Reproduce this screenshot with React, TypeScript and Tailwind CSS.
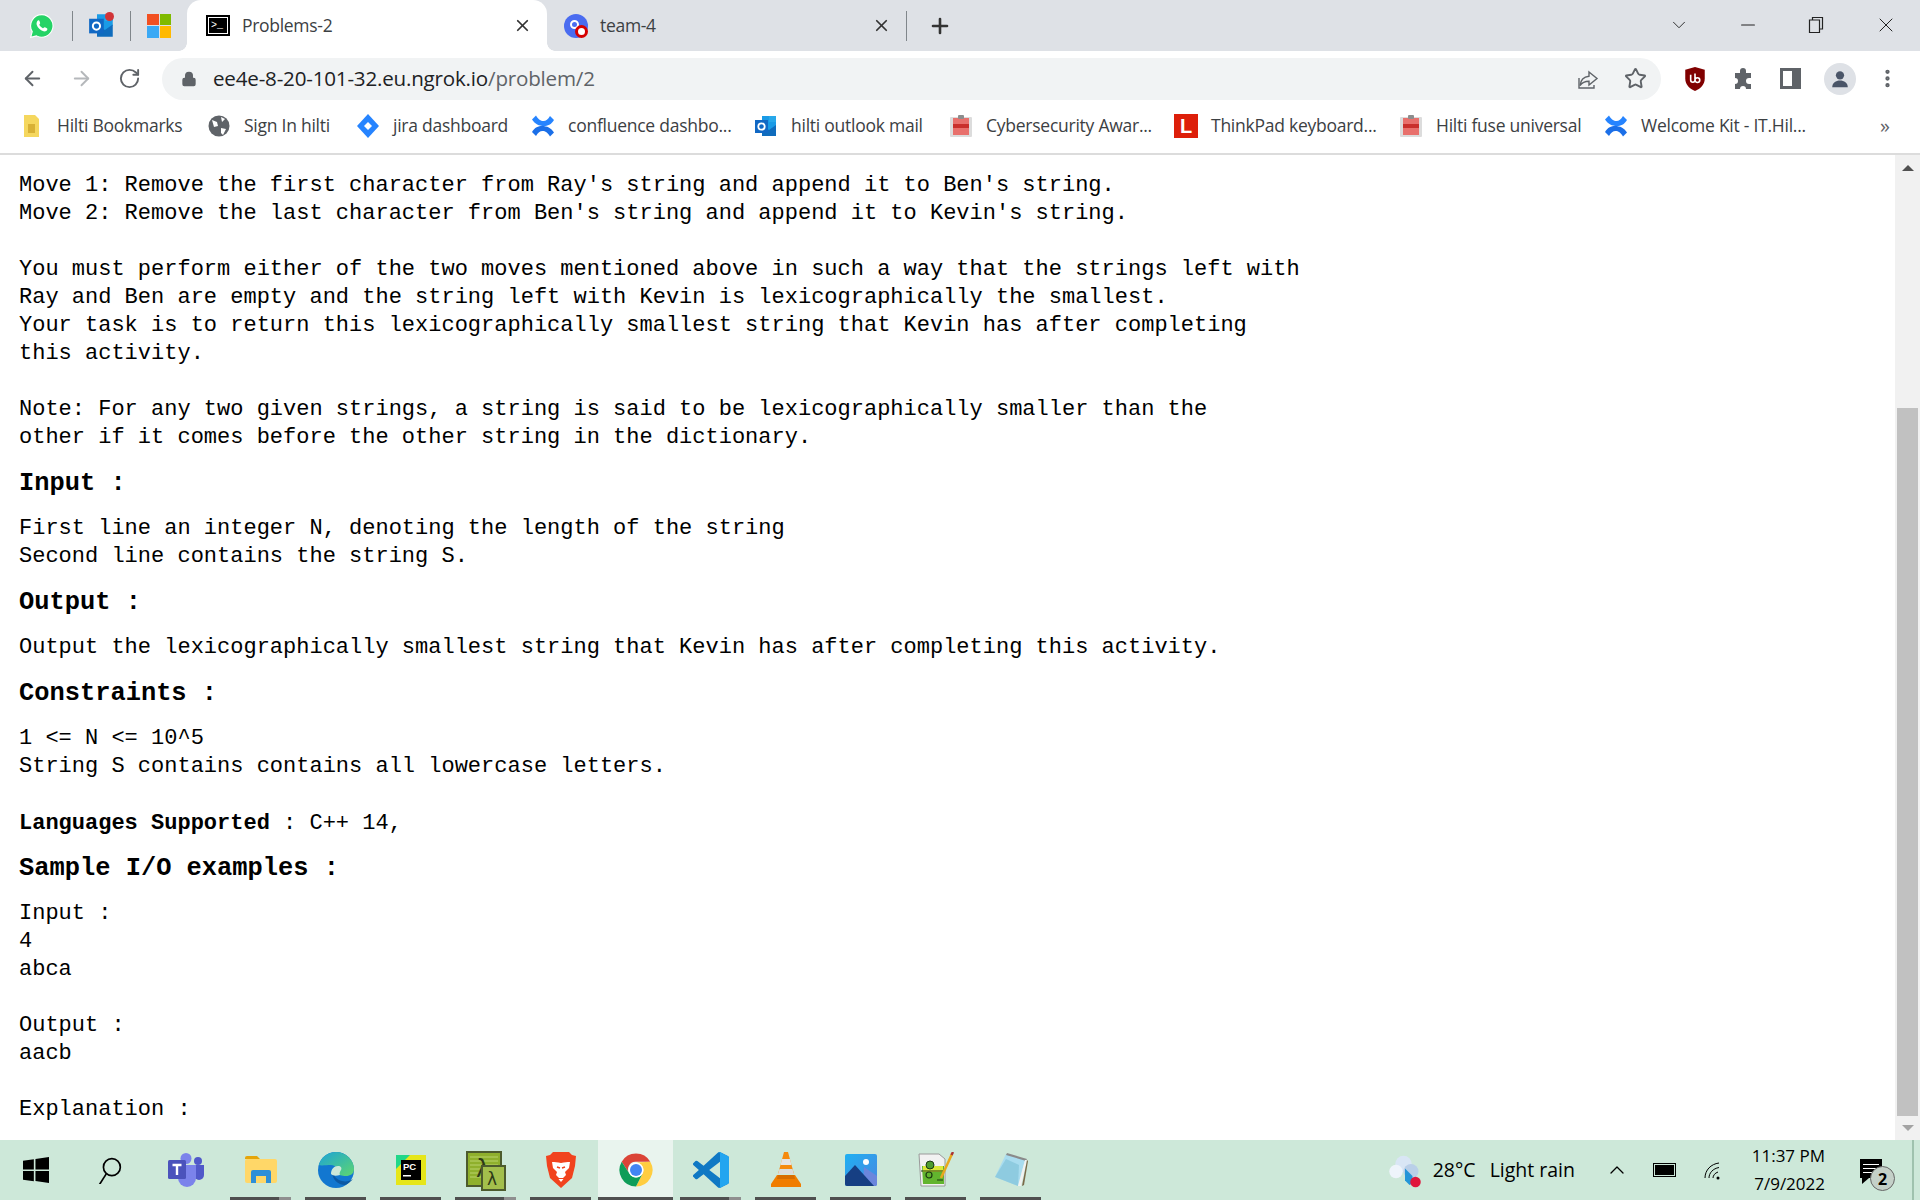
import { ArrowLeft, ArrowRight, ChevronDown, ChevronUp, Lock, Minus, MoreVertical, Plus, RotateCw, Star, X } from "lucide-react";

const ui = "font-['Open_Sans','Noto_Sans',sans-serif]";

function Svg({ size = 24, box = "0 0 24 24", children }: { size?: number; box?: string; children: React.ReactNode }) {
  return (
    <svg width={size} height={size} viewBox={box} className="shrink-0">
      {children}
    </svg>
  );
}

const Outlook = ({ size = 24 }: { size?: number }) => (
  <Svg size={size}>
    <path d="M8 2h14v10l-7 5-7-5z" fill="#1a9be6" />
    <path d="M15 2h7v6h-7z" fill="#28a8ea" />
    <path d="M8 11l7 5 7-5v11H8z" fill="#0f6cbd" />
    <rect x="1" y="6" width="13" height="13" fill="#1168c4" />
    <circle cx="7.5" cy="12.5" r="3.2" fill="none" stroke="#fff" strokeWidth="1.8" />
  </Svg>
);

const Confluence = () => (
  <Svg>
    <path d="M1 5.500L5 1.500C7.500 5.500 9.500 7 12.500 7 15 7 17 5.500 19 2L23 6C20.500 10.500 16.500 12 13 12 8 12 4 10 1 5.500Z" fill="#2684ff" />
    <path d="M23 18.500L19 22.500C16.500 18.500 14.500 17 11.500 17 9 17 7 18.500 5 22L1 18C3.500 13.500 7.500 12 11 12 16 12 20 14 23 18.500Z" fill="#1b6fe8" />
  </Svg>
);

const Clip = () => (
  <Svg>
    <rect x="1" y="3" width="22" height="20" rx="1" fill="#dcdcdc" />
    <rect x="4" y="4" width="16" height="17" fill="#e8706c" />
    <rect x="4" y="10" width="16" height="4" fill="#c9302c" />
    <rect x="9" y="1" width="6" height="4" rx="1" fill="#8d8d8d" />
  </Svg>
);

function Bookmark({ icon, label, w }: { icon: React.ReactNode; label: string; w: string }) {
  return (
    <div className="flex items-center gap-[13px] shrink-0">
      {icon}
      <span className={`whitespace-nowrap text-[17.5px] text-[#3c4043] tracking-[-0.25px] ${w}`}>{label}</span>
    </div>
  );
}

function TabStrip() {
  return (
    <div className="flex h-[51px] items-center bg-[#dee1e6] relative">
      <div className="w-[72px] flex justify-end pr-[17px]">
        <Svg size={26}>
          <path d="M12 1.5a10.4 10.4 0 0 0-9 15.7L1.5 22.5l5.4-1.4A10.4 10.4 0 1 0 12 1.5z" fill="#25d366" stroke="#fff" strokeWidth="1" />
          <path d="M8.5 6.8c1-.6 1.5 1.6 1.8 2.4.2.7-1 1.2-.7 1.8.7 1.3 1.800 2.300 3.200 3 .6.2 1-.9 1.700-.8.8.2 2.700 1.100 2.500 1.800-.4 1.700-2.200 2.300-3.700 1.900C10.400 16 8 13.500 7.100 10.800c-.4-1.500.2-3.200 1.400-4z" fill="#fff" />
        </Svg>
      </div>
      <div className="h-[30px] w-px bg-[#80868b]" />
      <div className="w-[57px] flex justify-center relative">
        <Outlook size={27} />
        <div className="absolute right-[16px] top-0 h-[9px] w-[9px] rounded-full bg-[#d13438]" />
      </div>
      <div className="h-[30px] w-px bg-[#80868b]" />
      <div className="w-[56px] flex justify-center">
        <div className="grid grid-cols-2 gap-px w-[24px] h-[24px]">
          <div className="bg-[#f25022]" />
          <div className="bg-[#7fba00]" />
          <div className="bg-[#3ba9f5]" />
          <div className="bg-[#ffb900]" />
        </div>
      </div>
      <div className="relative flex h-[51px] w-[360px] items-center rounded-t-[14px] bg-white pl-[19px] pr-[15px]">
        <div className="absolute -left-[8px] bottom-0 h-[8px] w-[8px] bg-[radial-gradient(circle_at_0_0,#dee1e6_7.5px,#ffffff_8px)]" />
        <div className="absolute -right-[8px] bottom-0 h-[8px] w-[8px] bg-[radial-gradient(circle_at_100%_0,#dee1e6_7.5px,#ffffff_8px)]" />
        <div className="mr-[12px] flex h-[21px] w-[24px] items-center justify-start border-[2px] border-black bg-black pl-[3px] text-[10px] leading-none text-white outline-1 -outline-offset-[3px] outline-white font-['Liberation_Mono']">&gt;_</div>
        <span className={`flex-1 text-[17.5px] text-[#3c4043] tracking-[-0.3px] ${ui}`}>Problems-2</span>
        <X size={19} strokeWidth={2.2} color="#333" />
      </div>
      <div className="flex w-[359px] items-center pl-[17px] pr-[15px]">
        <div className="relative mr-[12px] h-[24px] w-[24px] rounded-full bg-[#4a6cf0]">
          <div className="absolute left-[6px] top-[6px] h-[9px] w-[9px] rounded-full border-[2px] border-white" />
          <div className="absolute right-0 bottom-0 h-[13px] w-[13px] rounded-full border-[3px] border-[#d60000] bg-white" />
        </div>
        <span className={`flex-1 text-[17.5px] text-[#3c4043] tracking-[-0.3px] ${ui}`}>team-4</span>
        <X size={19} strokeWidth={2.2} color="#333" />
      </div>
      <div className="h-[30px] w-px bg-[#80868b]" />
      <div className="ml-[21px]">
        <Plus size={24} strokeWidth={2.6} color="#333" />
      </div>
      <div className="ml-auto flex items-center text-[#222] -mt-[1px]">
        <div className="flex w-[68px] justify-center pr-[6px]">
          <ChevronDown size={22} strokeWidth={1} />
        </div>
        <div className="flex w-[68px] justify-center pr-[4px]">
          <Minus size={22} strokeWidth={1.2} />
        </div>
        <div className="flex w-[68px] justify-center pr-[4px]">
          <Svg size={18} box="0 0 18 18">
            <path d="M5.500 3.500V1.500H15.500V13H12.500M2.500 4H12.500V16.500H2.500Z" fill="none" stroke="#222" strokeWidth="1.2" />
          </Svg>
        </div>
        <div className="flex w-[68px] justify-center">
          <X size={24} strokeWidth={1} />
        </div>
      </div>
    </div>
  );
}

function Toolbar() {
  return (
    <div className="flex h-[49px] items-center bg-white pl-[21px] pt-[6px]">
      <ArrowLeft size={23} strokeWidth={2} color="#5f6368" />
      <div className="ml-[26px]">
        <ArrowRight size={23} strokeWidth={2} color="#b5b8bb" />
      </div>
      <div className="ml-[25px]">
        <RotateCw size={23} strokeWidth={2} color="#5f6368" />
      </div>
      <div className="ml-[21px] flex h-[42px] w-[1499px] shrink-0 items-center rounded-full bg-[#f1f3f4] pl-[19px] pr-[14px]">
        <Lock size={16} color="#5f6368" fill="#5f6368" />
        <span className={`ml-[16px] text-[20.6px] tracking-[-0.2px] text-[#202124] ${ui}`}>
          ee4e-8-20-101-32.eu.ngrok.io<span className="text-[#5f6368]">/problem/2</span>
        </span>
        <div className="ml-auto flex items-center gap-[24px]">
          <Svg size={24}>
            <path d="M13 5l8 6.500-8 6.500v-3.800c-4 0-7 1.300-9 4.300 .5-5 3.500-8.700 9-9.300z" fill="none" stroke="#5f6368" strokeWidth="1.400" />
            <path d="M3 11v10h15v-3" fill="none" stroke="#5f6368" strokeWidth="1.400" />
          </Svg>
          <Star size={23} strokeWidth={2} color="#5f6368" />
        </div>
      </div>
      <div className="ml-[21px]">
        <Svg size={26}>
          <path d="M12 1l9 2.500v8c0 5.500-4 9.500-9 11.500-5-2-9-6-9-11.500v-8z" fill="#800000" />
          <path d="M8 8v5a2 2 0 0 0 4 0 M12 7v6a2.200 2.200 0 0 0 4.400 0 2.200 2.200 0 0 0-4.400 0" fill="none" stroke="#fff" strokeWidth="1.500" />
        </Svg>
      </div>
      <div className="ml-[23px]">
        <Svg size={24}>
          <path d="M9 4a3 3 0 0 1 6 0v2h5v5h-2a3 3 0 0 0 0 6h2v5h-5a3 3 0 0 0-6 0H4v-5a3 3 0 0 0 0-6V6h5z" fill="#5f6368" />
        </Svg>
      </div>
      <div className="ml-[25px] flex h-[21px] w-[21px] justify-end border-[3px] border-[#5f6368] bg-white">
        <div className="h-full w-[6px] bg-[#5f6368]" />
      </div>
      <div className="ml-[23px] flex h-[32px] w-[32px] items-center justify-center rounded-full bg-[#dee1e6]">
        <Svg size={22}>
          <circle cx="12" cy="8" r="4.500" fill="#4a5568" />
          <path d="M3.500 21c0-5 4-7.500 8.500-7.500s8.500 2.500 8.500 7.500z" fill="#4a5568" />
        </Svg>
      </div>
      <div className="ml-[20px]">
        <MoreVertical size={23} strokeWidth={2.5} color="#5f6368" />
      </div>
    </div>
  );
}

function Bookmarks() {
  return (
    <div className={`flex h-[55px] items-center gap-[25px] border-b-2 border-[#dcdcdc] bg-white pb-[2px] pl-[20px] ${ui}`}>
      <Bookmark
        w="w-[125px]"
        label="Hilti Bookmarks"
        icon={
          <Svg>
            <path d="M4 1h11l4 4v18H4z" fill="#f5d75e" />
            <rect x="8" y="10" width="7" height="9" fill="#d8b136" />
          </Svg>
        }
      />
      <Bookmark
        w="w-[87px]"
        label="Sign In hilti"
        icon={
          <Svg>
            <circle cx="12" cy="12" r="10.500" fill="#5f6368" />
            <path d="M5 6l5 2 1 4-4 1zM14 14l5 1-3 6-2-2zM14 3l4 2-3 3z" fill="#fff" />
          </Svg>
        }
      />
      <Bookmark
        w="w-[113px]"
        label="jira dashboard"
        icon={
          <Svg>
            <path d="M12 0l11 12-11 12L1 12z" fill="#2684ff" />
            <path d="M12 8l4 4-4 4-4-4z" fill="#fff" />
          </Svg>
        }
      />
      <Bookmark w="w-[161px]" label="confluence dashbo..." icon={<Confluence />} />
      <Bookmark w="w-[133px]" label="hilti outlook mail" icon={<Outlook />} />
      <Bookmark w="w-[163px]" label="Cybersecurity Awar..." icon={<Clip />} />
      <Bookmark
        w="w-[163px]"
        label="ThinkPad keyboard..."
        icon={<div className="flex h-[24px] w-[24px] items-center justify-center bg-[#dd1f0a] text-[20px] font-bold text-white font-['Liberation_Sans']">L</div>}
      />
      <Bookmark w="w-[143px]" label="Hilti fuse universal" icon={<Clip />} />
      <Bookmark w="w-[169px]" label="Welcome Kit - IT.Hil..." icon={<Confluence />} />
      <span className="ml-[45px] text-[20px] text-[#5f6368]">»</span>
    </div>
  );
}

const heading = "text-[25.4px] leading-[32px] font-bold";

function Content() {
  return (
    <div className="flex-1 overflow-hidden pt-[17px] pl-[19px] text-[22px] leading-[28px] text-black font-['Liberation_Mono',monospace] whitespace-pre">
      <div>{`Move 1: Remove the first character from Ray's string and append it to Ben's string.
Move 2: Remove the last character from Ben's string and append it to Kevin's string.

You must perform either of the two moves mentioned above in such a way that the strings left with
Ray and Ben are empty and the string left with Kevin is lexicographically the smallest.
Your task is to return this lexicographically smallest string that Kevin has after completing
this activity.

Note: For any two given strings, a string is said to be lexicographically smaller than the
other if it comes before the other string in the dictionary.`}</div>
      <h2 className={`${heading} mt-[16px]`}>Input :</h2>
      <div className="mt-[15px]">{`First line an integer N, denoting the length of the string
Second line contains the string S.`}</div>
      <h2 className={`${heading} mt-[16px]`}>Output :</h2>
      <div className="mt-[15px]">Output the lexicographically smallest string that Kevin has after completing this activity.</div>
      <h2 className={`${heading} mt-[16px]`}>Constraints :</h2>
      <div className="mt-[15px]">{`1 <= N <= 10^5
String S contains contains all lowercase letters.`}</div>
      <div className="mt-[29px]">
        <span className="font-bold">Languages Supported</span> : C++ 14,
      </div>
      <h2 className={`${heading} mt-[15px]`}>Sample I/O examples :</h2>
      <div className="mt-[15px]">{`Input :
4
abca

Output :
aacb

Explanation :`}</div>
    </div>
  );
}

function Scrollbar() {
  return (
    <div className="flex w-[25px] shrink-0 flex-col items-center bg-[#f1f1f1]">
      <div className="flex h-[26px] items-center justify-center">
        <div className="h-0 w-0 border-x-[6px] border-b-[6px] border-x-transparent border-b-[#505050]" />
      </div>
      <div className="mt-[227px] h-[708px] w-[21px] bg-[#c1c1c1]" />
      <div className="flex h-[24px] items-center justify-center">
        <div className="h-0 w-0 border-x-[6px] border-t-[6px] border-x-transparent border-t-[#a3a3a3]" />
      </div>
    </div>
  );
}

function Pinned({ active, bar = true, split, children }: { active?: boolean; bar?: boolean; split?: boolean; children: React.ReactNode }) {
  return (
    <div className={`relative flex h-[60px] w-[75px] items-center justify-center ${active ? "bg-[#e9f4ee]" : ""}`}>
      {children}
      {bar && (
        <div className={`absolute bottom-0 flex h-[3px] ${active ? "left-0 right-0" : "left-[7px] right-[7px]"}`}>
          <div className="flex-1 bg-[#4f4f4f]" />
          {split && <div className="w-[12px] bg-[#8f8f8f]" />}
        </div>
      )}
    </div>
  );
}

function Taskbar() {
  return (
    <div className="flex h-[60px] items-center bg-[#cde8d9] font-['Open_Sans',sans-serif] text-black">
      <div className="-ml-[2px] flex">
        <Pinned bar={false}>
          <Svg size={26}>
            <path d="M0 3.500l10-1.400V11.500H0zM11.500 1.900L24 0v11.500H11.500zM0 13h10v9.400L0 21zM11.500 13H24v11l-12.500-1.800z" fill="#000" />
          </Svg>
        </Pinned>
        <Pinned bar={false}>
          <div className="-ml-[4px]">
            <Svg size={27}>
              <circle cx="15" cy="9" r="7.500" fill="none" stroke="#000" strokeWidth="1.500" />
              <path d="M10 15L3 26" stroke="#000" strokeWidth="1.500" />
            </Svg>
          </div>
        </Pinned>
        <Pinned bar={false}>
          <Svg size={36} box="0 0 36 36">
            <circle cx="18" cy="6.500" r="5.500" fill="#7b83eb" />
            <circle cx="30" cy="9" r="4" fill="#5059c9" />
            <path d="M26 13h10v10a5 5 0 0 1-10 0z" fill="#5059c9" />
            <path d="M10 13h18v13a9 9 0 0 1-18 0z" fill="#7b83eb" />
            <rect x="0" y="8" width="18" height="19" rx="1.500" fill="#4b53bc" />
            <path d="M4.500 13h9M9 13v10" stroke="#fff" strokeWidth="2.400" />
          </Svg>
        </Pinned>
        <Pinned split>
          <Svg size={32} box="0 0 32 32">
            <path d="M0 4a2 2 0 0 1 2-2h10l3 3H0z" fill="#e5a50a" />
            <rect x="0" y="5" width="32" height="24" rx="2" fill="#ffd768" />
            <path d="M6 29V18a2 2 0 0 1 2-2h16a2 2 0 0 1 2 2v11h-5v-7H11v7z" fill="#2e8fd8" />
          </Svg>
        </Pinned>
        <Pinned>
          <Svg size={36} box="0 0 36 36">
            <defs>
              <linearGradient id="edgeTop" x1="0" y1="0" x2="1" y2="1">
                <stop offset="0" stopColor="#1ba3d8" />
                <stop offset="1" stopColor="#5ed66f" />
              </linearGradient>
            </defs>
            <circle cx="18" cy="18" r="18" fill="#1277d0" />
            <path d="M1 13C3 5 10 0 18 0c10 0 18 8 18 17 0 5-4 7-8 7-4 0-8-1-9-4 1-3-1-7-6-7-5 0-9 1-13 0z" fill="url(#edgeTop)" />
            <path d="M14 20c0 7 6 13 13 13 3-1 6-4 8-6-3 2-7 3-11 2-5-1-8-5-10-9z" fill="#0c59a4" />
            <path d="M13 22c0-5 3-8 7-8 3 0 4 2 3 4-1 2-2 3-1 5-4 1-7 1-9-1z" fill="#cde8d9" />
          </Svg>
        </Pinned>
        <Pinned>
          <Svg size={30} box="0 0 30 30">
            <rect width="30" height="30" fill="#e6e61a" />
            <path d="M0 0h14L0 14z" fill="#21d789" />
            <rect x="5" y="5" width="20" height="20" fill="#000" />
            <text x="7" y="14.500" fontSize="9.500" fontWeight="bold" fill="#fff" fontFamily="Liberation Sans">PC</text>
            <rect x="7" y="20" width="8" height="1.500" fill="#fff" />
          </Svg>
        </Pinned>
        <Pinned split>
          <div className="mt-[2px]">
            <Svg size={40} box="0 0 40 40">
              <rect x="1" y="1" width="34" height="34" fill="#8fb02c" stroke="#4d5b2d" strokeWidth="2" />
              <path d="M4 6h28M4 10h28M4 14h28M4 18h12M4 22h12M4 26h12" stroke="#b9d36a" strokeWidth="1" />
              <text x="10" y="26" fontSize="24" fill="#2e3a18" fontFamily="DejaVu Sans">λ</text>
              <rect x="16" y="15" width="23" height="24" fill="#a3bf4c" stroke="#4d5b2d" strokeWidth="2" />
              <text x="21" y="34" fontSize="17" fill="#2e3a18" fontFamily="DejaVu Sans">λ</text>
            </Svg>
          </div>
        </Pinned>
        <Pinned>
          <Svg size={36} box="0 0 30 36">
            <path d="M7 0h16l3 3 4 1-1 10-3 12-11 10L4 26 1 14 0 4l4-1z" fill="#f1431e" />
            <path d="M6 10c3 0 5 0 9 1 4-1 6-1 9-1l-1 6-4 4 1 3-3 3h-4l-3-3 1-3-4-4z" fill="#fff" />
            <path d="M11 15l3 1M19 15l-3 1" stroke="#f1431e" strokeWidth="1.500" />
            <path d="M12.500 27h5l-2.500 3z" fill="#fff" />
          </Svg>
        </Pinned>
        <Pinned active>
          <Svg size={36}>
            <path d="M2.470 6.500A11 11 0 0 1 21.530 6.500H12A5 5 0 0 0 7.670 14.500Z" fill="#db4437" />
            <path d="M21.530 6.500A11 11 0 0 1 12 23L16.330 14.500A5 5 0 0 0 12 7Z" fill="#ffcd40" />
            <path d="M12 23A11 11 0 0 1 2.470 6.500L7.670 14.500A5 5 0 0 0 16.330 14.500Z" fill="#0f9d58" />
            <circle cx="12" cy="12" r="5" fill="#fff" />
            <circle cx="12" cy="12" r="4" fill="#4285f4" />
          </Svg>
        </Pinned>
        <Pinned split>
          <Svg size={36} box="0 0 100 100">
            <path
              fillRule="evenodd"
              d="M70.900 99.300a6.200 6.200 0 0 0 5-.2l20.600-9.900a6.200 6.200 0 0 0 3.500-5.600V16.400a6.200 6.200 0 0 0-3.500-5.600L75.900.9a6.200 6.200 0 0 0-7.100 1.200L29.400 38 12.200 25a4.200 4.200 0 0 0-5.300.2L1.400 30.300a4.200 4.200 0 0 0 0 6.200L16.300 50 1.400 63.500a4.200 4.200 0 0 0 0 6.200l5.500 5a4.200 4.200 0 0 0 5.300.2l17.200-13L68.800 97.900a6.200 6.200 0 0 0 2.100 1.400zM75 27.300 45.100 50 75 72.700z"
              fill="#0f78c4"
            />
            <path d="M72 0.500l3.900.4 20.600 9.900a6.200 6.200 0 0 1 3.500 5.600v67.200a6.200 6.200 0 0 1-3.500 5.600L75.900 99.100l-3.900.4c2-1 3-3 3-5V5.500c0-2-1-4-3-5z" fill="#23a5f0" />
          </Svg>
        </Pinned>
        <Pinned>
          <Svg size={36} box="0 0 30 36">
            <path d="M13 0h4l3 11 3 11H7l3-11z" fill="#f58a0e" />
            <path d="M11 7h8l1.500 6h-11z" fill="#e4e4e4" />
            <path d="M8.500 17h13l1.500 5H7z" fill="#dcdcdc" />
            <path d="M6 23h18l6 9v3H0v-3z" fill="#f07d00" />
            <path d="M7 23h16l1 4H6z" fill="#d86c00" />
          </Svg>
        </Pinned>
        <Pinned>
          <Svg size={32} box="0 0 32 32">
            <defs>
              <linearGradient id="photoSky" x1="0" y1="0" x2="1" y2="1">
                <stop offset="0" stopColor="#1fb0f2" />
                <stop offset="1" stopColor="#4a87e0" />
              </linearGradient>
            </defs>
            <rect width="32" height="32" rx="2" fill="url(#photoSky)" />
            <path d="M19 13l13 9v8a2 2 0 0 1-2 2H18z" fill="#6b86dc" />
            <path d="M0 22l10-11 19 21H2a2 2 0 0 1-2-2z" fill="#163f83" />
            <circle cx="21" cy="8" r="3" fill="#fff" />
          </Svg>
        </Pinned>
        <Pinned>
          <Svg size={36} box="0 0 36 36">
            <path d="M1 2h20l6 5v27H3z" fill="#f2f2f2" stroke="#9a9a9a" strokeWidth="1" />
            <path d="M4 14h22v18H5z" fill="#62b52e" />
            <path d="M5 14h20v6H5z" fill="#dce83a" />
            <circle cx="12" cy="13" r="4" fill="#4e9c2f" stroke="#1c3a12" strokeWidth="1" />
            <circle cx="11" cy="23" r="3" fill="none" stroke="#1c3a12" strokeWidth="1.200" />
            <path d="M3 19h22M19 28h6" stroke="#1c3a12" strokeWidth="1.200" />
            <path d="M23 26L34 2" stroke="#e8a81d" strokeWidth="2.500" />
            <path d="M33.500 3L35 0" stroke="#a33" strokeWidth="2.500" />
          </Svg>
        </Pinned>
        <Pinned>
          <Svg size={34} box="0 0 34 34">
            <path d="M12 1l19 6-7 26L1 24z" fill="#a9dcef" />
            <path d="M1 24L12 6l13 6-1 21z" fill="#7dbfd6" opacity="0.6" />
            <path d="M13 0l20 6-1 2L12 2z" fill="#8a8a8a" />
            <path d="M24 33l7-26 2 0-6 26z" fill="#f2f2f2" />
            <path d="M28 33l5-26 1 1-4 24z" fill="#7a6a4a" />
          </Svg>
        </Pinned>
      </div>
      <div className="ml-auto flex h-full items-center">
        <Svg size={36}>
          <circle cx="11" cy="8" r="5.500" fill="#d9e6f5" />
          <circle cx="6" cy="13" r="4.500" fill="#eef4fb" />
          <circle cx="16" cy="13" r="5" fill="#b9cfe8" />
          <path d="M12 11l5 5v5l-2 1-3-3z" fill="#2495d8" />
          <circle cx="19" cy="20" r="3.500" fill="#e0163c" />
        </Svg>
        <span className="ml-[10px] text-[19.5px]">28°C</span>
        <span className="ml-[14px] text-[19.5px]">Light rain</span>
        <div className="ml-[30px]">
          <ChevronUp size={24} strokeWidth={1.3} />
        </div>
        <div className="ml-[24px] flex h-[14px] w-[23px] items-center border border-black p-[1px]">
          <div className="h-full w-full bg-black" />
        </div>
        <div className="ml-[26px]">
          <Svg size={24}>
            <path d="M3 20C3 12 9 6 17 5M7 20C7 15 11 10.500 17 9.500M11 20C11 17.500 13 15 16 14" fill="none" stroke="#000" strokeWidth="1" />
            <circle cx="16" cy="20" r="1.500" fill="#000" />
          </Svg>
        </div>
        <div className="ml-[25px] flex w-[74px] flex-col items-end whitespace-nowrap text-[17px] leading-[28px]">
          <span>11:37 PM</span>
          <span>7/9/2022</span>
        </div>
        <div className="relative ml-[35px] mr-[30px] mt-[3px] h-[25px] w-[22px]">
          <div className="flex h-[19px] w-[22px] flex-col justify-center gap-[3px] bg-black px-[3px]">
            <div className="h-px bg-white" />
            <div className="h-px bg-white" />
            <div className="h-px w-[10px] bg-white" />
          </div>
          <div className="h-0 w-0 border-r-[7px] border-t-[6px] border-r-transparent border-t-black ml-[2px]" />
          <div className="absolute left-[10px] top-[7px] flex h-[25px] w-[25px] items-center justify-center rounded-full border border-[#666] bg-[#c4d0c8] text-[16px] font-bold">2</div>
        </div>
        <div className="mr-[6px] h-full w-[2px] bg-[#9fc2ae]" />
      </div>
    </div>
  );
}

export default function App() {
  return (
    <div className="flex h-screen w-full flex-col overflow-hidden bg-white">
      <div className={ui}>
        <TabStrip />
        <Toolbar />
      </div>
      <Bookmarks />
      <div className="flex min-h-0 flex-1">
        <Content />
        <Scrollbar />
      </div>
      <Taskbar />
    </div>
  );
}
